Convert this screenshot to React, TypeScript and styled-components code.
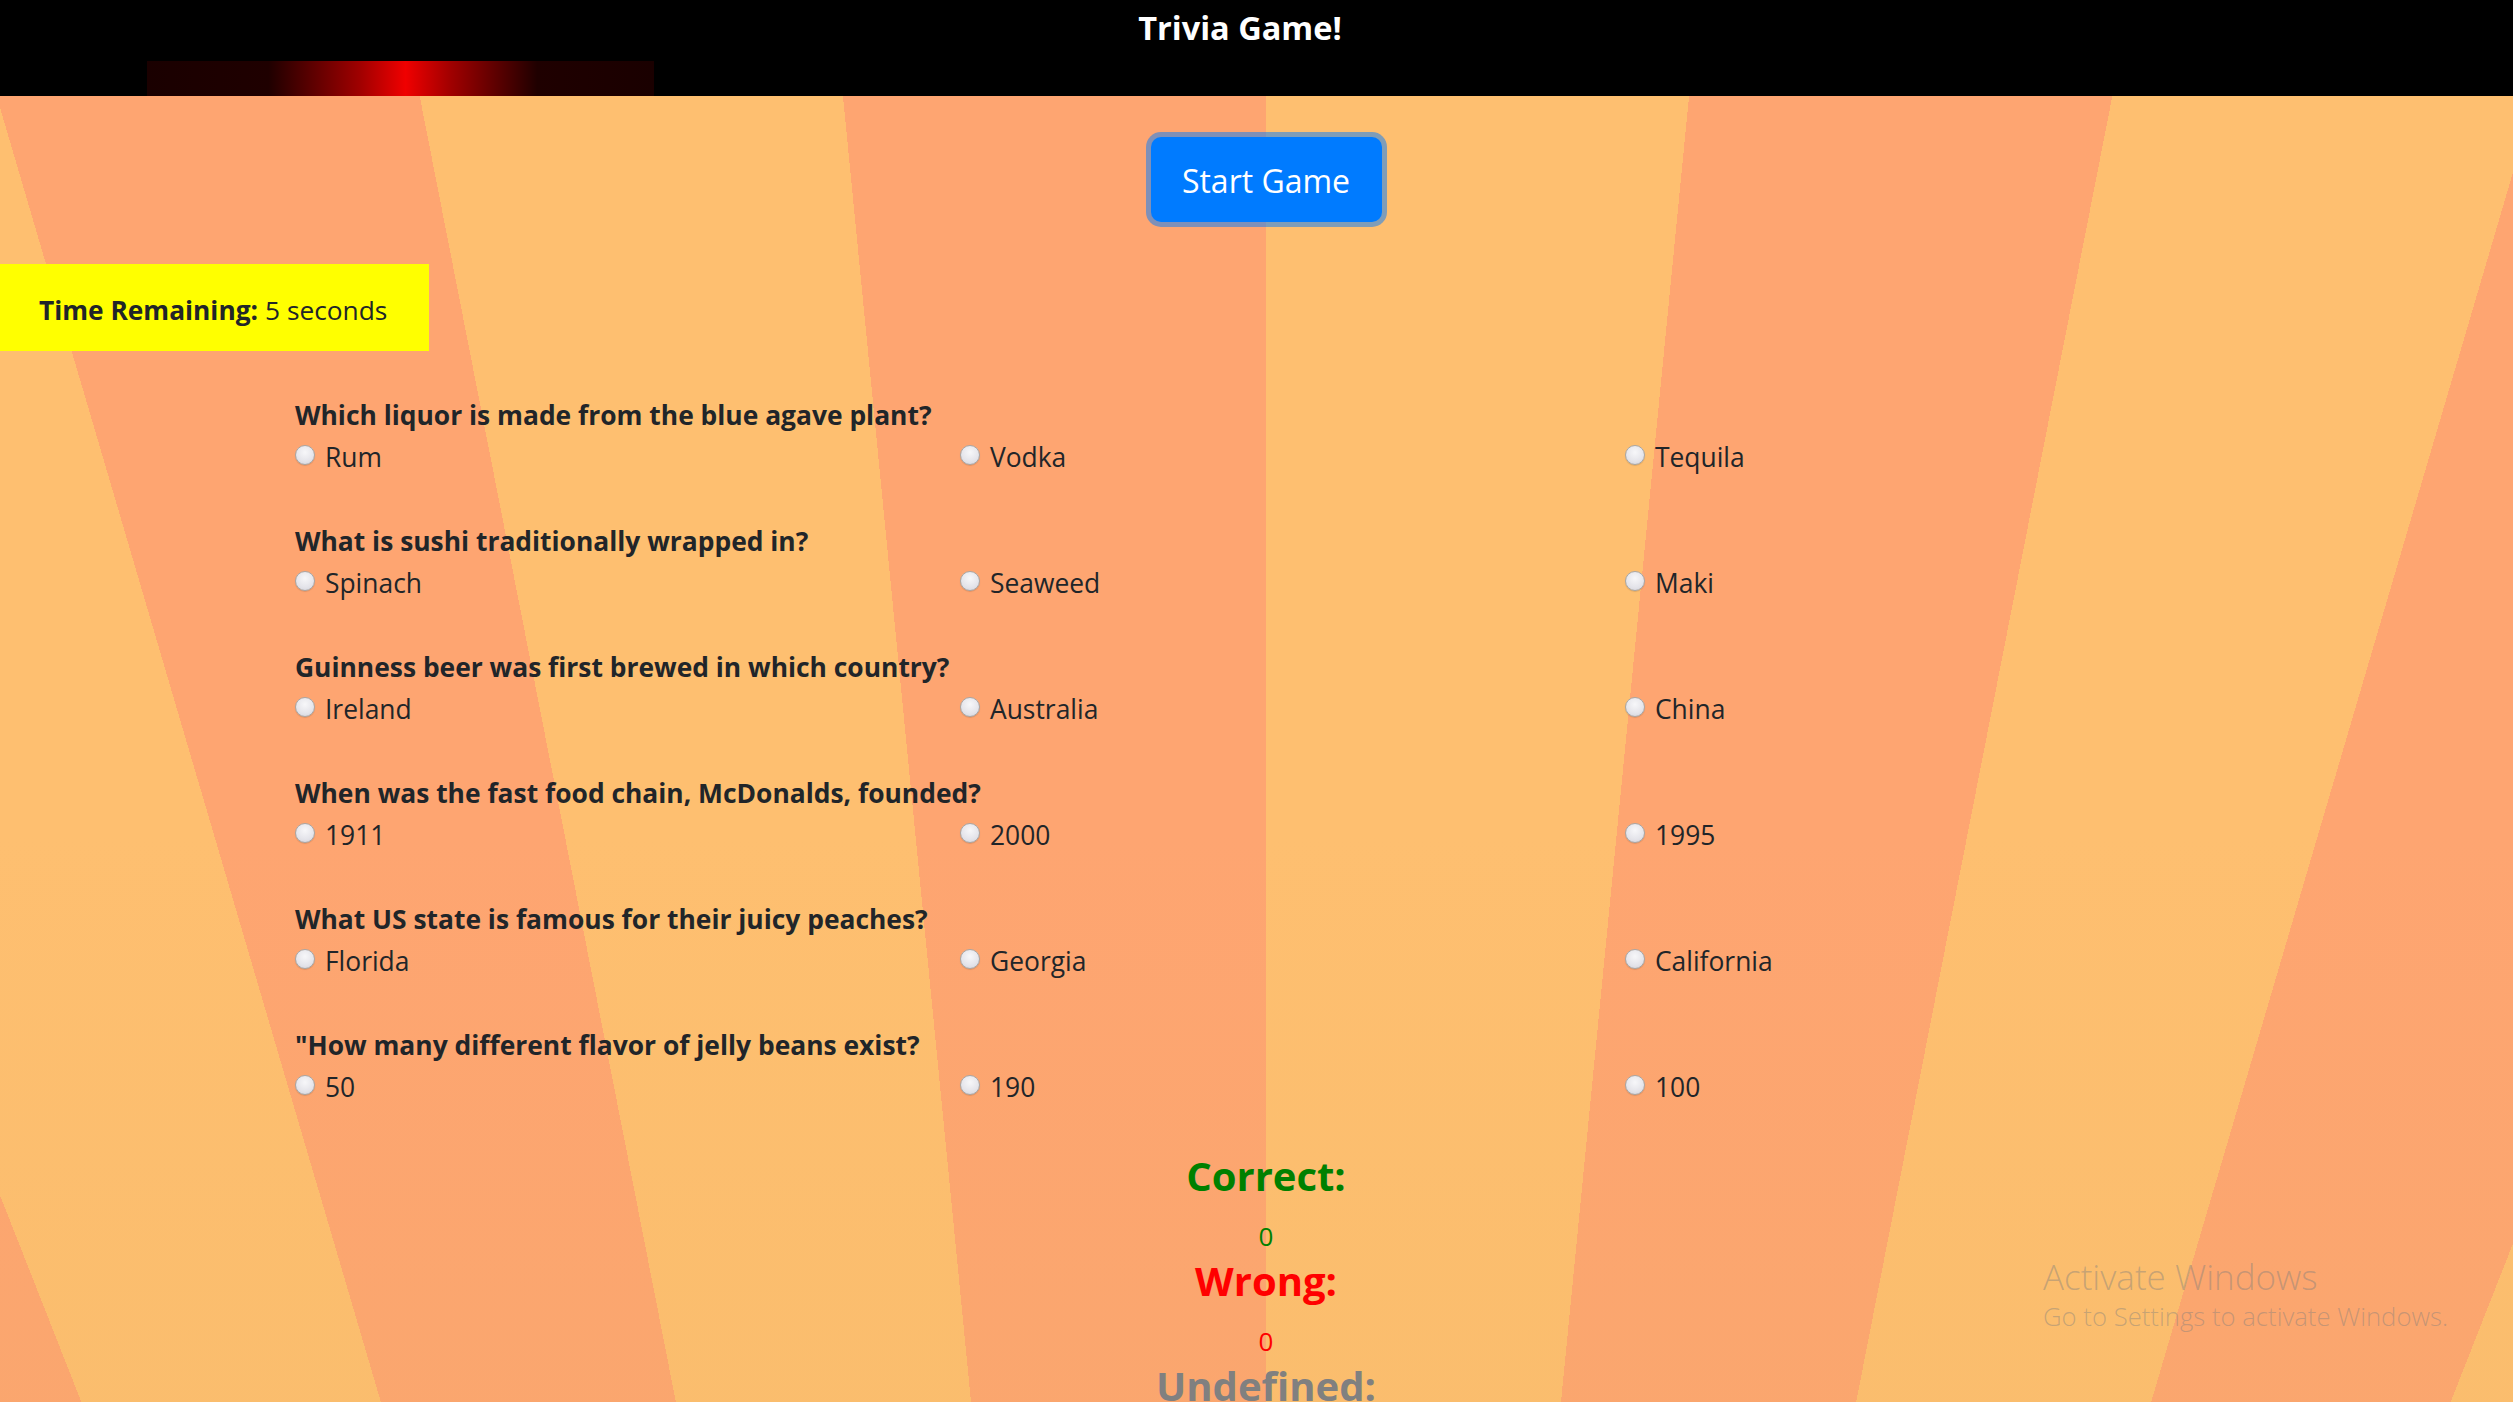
import React from "react";
import styled, { createGlobalStyle } from "styled-components";

const GlobalStyle = createGlobalStyle`
  html, body {
    margin: 0;
    padding: 0;
  }
  body {
    font-family: "Segoe UI", "Open Sans", Lato, sans-serif;
    color: #212529;
    background: #000;
  }
`;

const SALMON = "#fea571";
const LIGHT = "#febf70";

// sunburst rays converge far below the fold, a bit right of centre
const Page = styled.div`
  position: relative;
  min-height: 100vh;
  overflow: hidden;
  background:
    linear-gradient(180deg, rgba(255, 255, 255, 0) 55%, rgba(225, 175, 90, 0.14) 100%),
    conic-gradient(
      from 0deg at 1266px 4410px,
      ${LIGHT} 0deg 5.6deg,
      ${SALMON} 5.6deg 11.1deg,
      ${LIGHT} 11.1deg 16.4deg,
      ${SALMON} 16.4deg 21.5deg,
      ${LIGHT} 21.5deg 26.5deg,
      ${SALMON} 26.5deg 333.5deg,
      ${SALMON} 333.5deg 338.5deg,
      ${LIGHT} 338.5deg 343.6deg,
      ${SALMON} 343.6deg 348.9deg,
      ${LIGHT} 348.9deg 354.4deg,
      ${SALMON} 354.4deg 360deg
    );
  background-color: ${SALMON};
`;

const Header = styled.header`
  height: 96px;
  background: #000;
  display: flex;
  flex-direction: column;
`;

const Title = styled.h1`
  margin: 0;
  padding: 6px 33px 0 0;
  text-align: center;
  color: #fff;
  font-size: 32.5px;
  font-weight: 700;
  line-height: 44px;
`;

const GlowBar = styled.div`
  margin-top: auto;
  margin-left: 147px;
  width: 507px;
  height: 35px;
  background: linear-gradient(
    90deg,
    #1a0000 0%,
    #1f0000 24%,
    #a00000 42%,
    #f00000 51%,
    #a00000 60%,
    #1f0000 77%,
    #1a0000 100%
  );
`;

const Centered = styled.div`
  display: flex;
  flex-direction: column;
  align-items: center;
  padding-left: 19px;
`;

const StartButton = styled.button`
  margin-top: 41px;
  width: 231px;
  height: 85px;
  border: none;
  border-radius: 10px;
  background: #007bff;
  color: #fff;
  font-family: inherit;
  font-size: 32px;
  line-height: 1;
  padding: 2px 0 0;
  box-shadow: 0 0 0 5px rgba(0, 123, 255, 0.5);
  cursor: pointer;
`;

const TimerBox = styled.div`
  margin-top: 42px;
  width: 429px;
  height: 87px;
  box-sizing: border-box;
  padding: 5px 0 0 39px;
  display: flex;
  align-items: center;
  background: #ffff00;
  font-size: 26.3px;
  color: #212529;

  b {
    font-weight: 700;
    margin-right: 7px;
  }
`;

const QuizList = styled.form`
  margin: 44px 0 0 295px;
`;

const Question = styled.div`
  margin-bottom: 44px;
`;

const Prompt = styled.div`
  font-size: 26.4px;
  font-weight: 700;
  line-height: 40px;
  margin-bottom: 2px;
`;

const Answers = styled.div`
  display: grid;
  grid-template-columns: repeat(3, 665px);
`;

const Answer = styled.label`
  display: flex;
  align-items: center;
  gap: 10px;
  height: 40px;
  font-size: 26.4px;
`;

const Radio = styled.input.attrs({ type: "radio" })`
  appearance: none;
  margin: 0 0 4px 0;
  width: 20px;
  height: 20px;
  border-radius: 50%;
  border: 1px solid #a7a7a7;
  box-sizing: border-box;
  background: radial-gradient(circle at 50% 35%, #f7f7f9 0%, #e4e4ea 60%, #d2d2da 100%);
  box-shadow: 0 1px 1px rgba(0, 0, 0, 0.12);
`;

const ScoreLabel = styled.h2<{ $color: string }>`
  margin: 0;
  font-size: 40px;
  font-weight: 700;
  line-height: 50px;
  color: ${(p) => p.$color};
`;

const ScoreValue = styled.div<{ $color: string }>`
  margin: 15px 0 0;
  font-size: 26px;
  line-height: 40px;
  color: ${(p) => p.$color};
`;

const Scores = styled(Centered)`
  padding-bottom: 40px;
`;

const Watermark = styled.div`
  position: absolute;
  left: 2043px;
  top: 1254px;
  color: rgba(125, 125, 125, 0.42);
  pointer-events: none;

  div:first-child {
    font-size: 35px;
    line-height: 46px;
    font-weight: 300;
  }
  div:last-child {
    font-size: 25.7px;
    line-height: 34px;
    font-weight: 300;
  }
`;

const questions = [
  { q: "Which liquor is made from the blue agave plant?", a: ["Rum", "Vodka", "Tequila"] },
  { q: "What is sushi traditionally wrapped in?", a: ["Spinach", "Seaweed", "Maki"] },
  { q: "Guinness beer was first brewed in which country?", a: ["Ireland", "Australia", "China"] },
  { q: "When was the fast food chain, McDonalds, founded?", a: ["1911", "2000", "1995"] },
  { q: "What US state is famous for their juicy peaches?", a: ["Florida", "Georgia", "California"] },
  { q: "\"How many different flavor of jelly beans exist?", a: ["50", "190", "100"] },
];

export default function App() {
  return (
    <>
      <GlobalStyle />
      <Page>
        <Header>
          <Title>Trivia Game!</Title>
          <GlowBar />
        </Header>

        <Centered>
          <StartButton type="button">Start Game</StartButton>
        </Centered>

        <TimerBox>
          <b>Time Remaining:</b> 5 seconds
        </TimerBox>

        <QuizList>
          {questions.map((item, qi) => (
            <Question key={qi}>
              <Prompt>{item.q}</Prompt>
              <Answers>
                {item.a.map((ans) => (
                  <Answer key={ans}>
                    <Radio name={`q${qi}`} value={ans} />
                    {ans}
                  </Answer>
                ))}
              </Answers>
            </Question>
          ))}
        </QuizList>

        <Scores>
          <ScoreLabel $color="#008000">Correct:</ScoreLabel>
          <ScoreValue $color="#008000">0</ScoreValue>
          <ScoreLabel $color="#ff0000">Wrong:</ScoreLabel>
          <ScoreValue $color="#ff0000">0</ScoreValue>
          <ScoreLabel $color="#808080">Undefined:</ScoreLabel>
          <ScoreValue $color="#808080">0</ScoreValue>
        </Scores>

        <Watermark>
          <div>Activate Windows</div>
          <div>Go to Settings to activate Windows.</div>
        </Watermark>
      </Page>
    </>
  );
}
